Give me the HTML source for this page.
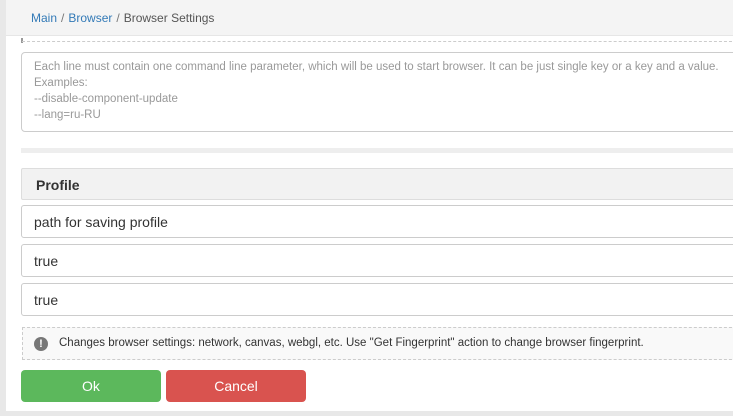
<!DOCTYPE html>
<html><head><style>
*{box-sizing:border-box;margin:0;padding:0}
body{width:733px;height:416px;overflow:hidden;background:#e8e8e8;font-family:"Liberation Sans",Arial,sans-serif;position:relative}
.main{position:absolute;left:6px;top:0;width:740px;height:411px;background:#fff}
.hdr{position:absolute;left:6px;top:0;width:740px;height:36px;background:#f4f4f4;border-bottom:1px solid #e6e6e6}
.bc{position:absolute;left:31px;top:11px;font-size:12px;color:#555}
.bc a{color:#337ab7;text-decoration:none}
.bc .s{color:#777;margin:0 4px}
.dash{position:absolute;left:22px;top:41px;width:720px;border-top:1px dashed #ccc}
.tick{position:absolute;left:21px;top:38px;width:2px;height:5px;background:#999}
.ta{position:absolute;left:21px;top:52px;width:730px;height:80px;border:1px solid #ccc;border-radius:4px;padding:6px 12px;font-size:11.5px;line-height:16px;color:#999;white-space:nowrap}
.bar{position:absolute;left:21px;top:148px;width:720px;height:5px;background:#eee}
.ph{position:absolute;left:21px;top:168px;width:730px;height:32px;background:#f2f2f2;border:1px solid #ddd;border-radius:2px;font-weight:bold;font-size:14px;color:#333;padding:8px 14px}
.in{position:absolute;left:21px;width:730px;height:33px;border:1px solid #ccc;border-radius:3px;font-size:14px;color:#333;padding:8px 12px}
.info{position:absolute;left:22px;top:327px;width:730px;height:33px;border:1px dashed #ccc;background:#f9f9f9;font-size:11.5px;color:#333;padding:9px 0 0 36px;white-space:nowrap}
.ic{position:absolute;left:11px;top:9px;width:14px;height:14px;border-radius:50%;background:#777;color:#fff;font-size:11px;font-weight:bold;text-align:center;line-height:14px}
.btn{position:absolute;top:370px;width:140px;height:32px;border-radius:4px;color:#fff;font-size:14px;text-align:center;line-height:32px}
</style></head><body>
<div class="main"></div>
<div class="hdr"></div>
<div class="bc"><a>Main</a><span class="s">/</span><a>Browser</a><span class="s">/</span>Browser Settings</div>
<div class="tick"></div><div class="dash"></div>
<div class="ta">Each line must contain one command line parameter, which will be used to start browser. It can be just single key or a key and a value.<br>Examples:<br>--disable-component-update<br>--lang=ru-RU</div>
<div class="bar"></div>
<div class="ph">Profile</div>
<div class="in" style="top:205px">path for saving profile</div>
<div class="in" style="top:244px">true</div>
<div class="in" style="top:283px">true</div>
<div class="info"><span class="ic">!</span>Changes browser settings: network, canvas, webgl, etc. Use "Get Fingerprint" action to change browser fingerprint.</div>
<div class="btn" style="left:21px;background:#5cb85c">Ok</div>
<div class="btn" style="left:166px;background:#d9534f">Cancel</div>
</body></html>
